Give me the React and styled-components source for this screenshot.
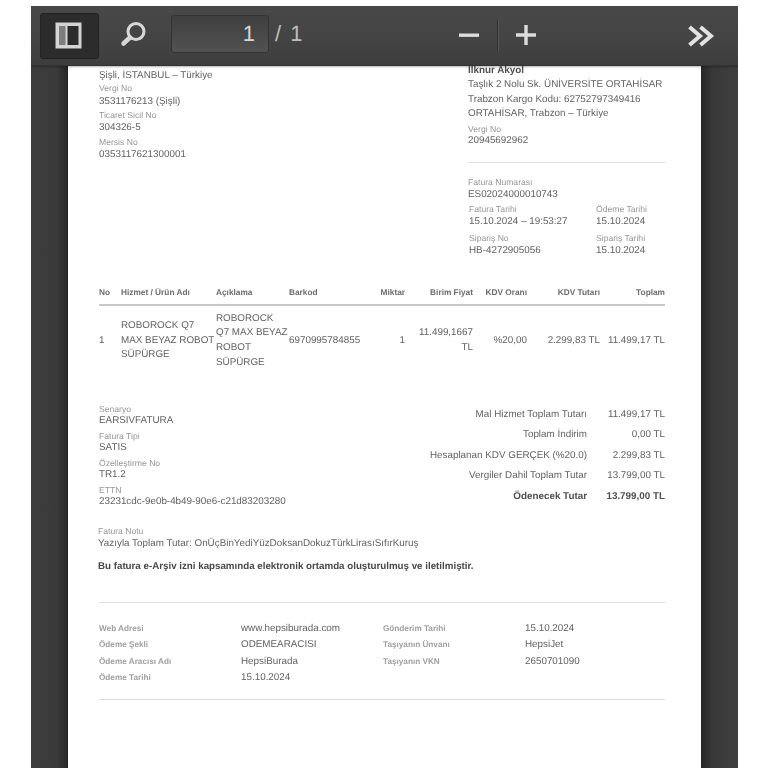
import React from "react";
import styled, { createGlobalStyle } from "styled-components";

const Global = createGlobalStyle`
  html, body { margin: 0; padding: 0; background: #fff; height: 100%; overflow: hidden; }
  #root { height: 100%; }
  * { box-sizing: border-box; }
`;

const Viewer = styled.div`
  margin: 6px 30px 0 31px;
  height: 762px;
  display: flex;
  flex-direction: column;
  overflow: hidden;
  background: linear-gradient(90deg, #3d3d3d 0%, #3a3a3a 70%, #262626 100%) left / 37px 100% no-repeat,
    linear-gradient(90deg, #262626 0%, #383838 30%, #3f3f3f 100%) right / 37px 100% no-repeat, #3a3a3a;
  font-family: "Liberation Sans", Arial, sans-serif;
  text-rendering: geometricPrecision;
`;

const Toolbar = styled.header`
  height: 60px;
  flex: none;
  display: flex;
  align-items: center;
  padding: 0 23px 0 9px;
  background: linear-gradient(180deg, #484848 0%, #444 55%, #3d3d3d 100%);
  border-bottom: 1px solid #333;
  box-shadow: 0 1px 2px rgba(0, 0, 0, 0.3);
  position: relative;
  z-index: 1;
`;

const ToggleButton = styled.div`
  width: 59px;
  height: 46px;
  padding-right: 2px;
  display: flex;
  align-items: center;
  justify-content: center;
  background: #2c2c2c;
  border: 1px solid #222;
  border-radius: 3px;
`;

const SearchIcon = styled.svg`
  width: 26px;
  height: 26px;
  margin: 0 0 3px 21px;
`;

const PageInput = styled.div`
  width: 98px;
  height: 38px;
  margin: 0 0 4px 25px;
  display: flex;
  align-items: center;
  justify-content: flex-end;
  padding-right: 13px;
  color: #d5d5d5;
  font-size: 22px;
  background: linear-gradient(180deg, #3f3f3f, #515151);
  border: 1px solid #333;
  border-radius: 3px;
`;

const PageCount = styled.span`
  margin: 0 0 4px 6px;
  color: #bdbdbd;
  font-size: 22px;
  word-spacing: 3px;
`;

const ZoomGroup = styled.div`
  display: flex;
  align-items: center;
  margin: 0 0 2px 156px;
`;

const ZoomIcon = styled.svg`
  width: 22px;
  height: 22px;
`;

const ZoomDivider = styled.span`
  width: 2px;
  height: 32px;
  margin: 0 16px 0 17px;
  background: #333;
  border-right: 1px solid #555;
`;

const MoreIcon = styled.svg`
  width: 28px;
  height: 24px;
  margin-left: auto;
`;

const Body = styled.main`
  flex: 1;
  min-height: 0;
  padding: 0 37px;
`;

const Page = styled.article`
  height: 100%;
  padding: 0 36px 0 31px;
  overflow: hidden;
  background: #fff;
  color: #626262;
  font-size: 9.85px;
  filter: blur(0.45px);
`;

const TopRow = styled.section`
  display: flex;
  justify-content: space-between;
  height: 210px;
`;

const LeftColumn = styled.div`
  padding-top: 2px;
`;

const RightColumn = styled.div`
  width: 197px;
  margin-top: -3px;
`;

const Label = styled.div`
  font-size: 8.6px;
  line-height: ${(p) => p.$h ?? 10}px;
  color: #969696;
  margin-top: ${(p) => p.$top ?? 4}px;
  margin-bottom: ${(p) => p.$gap ?? 0}px;
  white-space: nowrap;
`;

const Value = styled.div`
  font-size: 9.85px;
  line-height: ${(p) => p.$line ?? 13}px;
  padding-top: 1px;
  margin-bottom: -1px;
  color: #626262;
  white-space: nowrap;
`;

const PlainValue = styled(Value)`
  padding-top: 0;
  margin-bottom: 0;
`;

const Name = styled(Value)`
  font-weight: 700;
  color: #4f4f4f;
  line-height: 14px;
`;

const Address = styled(Value)`
  line-height: 14.6px;
`;

const Rule = styled.hr`
  height: 1px;
  border: 0;
  background: #dedede;
  margin: ${(p) => p.$margin ?? "0"};
`;

const DateGrid = styled.div`
  display: grid;
  grid-template-columns: 127px 1fr;
  padding-left: 1px;
`;

const InvoiceTable = styled.section`
  margin-top: 8px;
`;

const columns = "22px 95px 73px 84px 32px 68px 54px 73px 65px";

const HeadRow = styled.div`
  display: grid;
  grid-template-columns: ${columns};
  height: 22px;
  align-items: center;
  border-bottom: 2px solid #c9c9c9;
  padding-bottom: 4px;
`;

const HeadCell = styled.div`
  font-size: 8.3px;
  font-weight: 700;
  color: #6c6c6c;
  white-space: nowrap;
  text-align: ${(p) => (p.$right ? "right" : "left")};
`;

const BodyRow = styled.div`
  display: grid;
  grid-template-columns: ${columns};
  align-items: center;
  height: 70px;
`;

const Cell = styled.div`
  font-size: 9.85px;
  line-height: 14.6px;
  text-align: ${(p) => (p.$right ? "right" : "left")};
  white-space: nowrap;
`;

const Summary = styled.section`
  display: flex;
  justify-content: space-between;
  margin-top: 29px;
`;

const SummaryLeft = styled.div``;

const Totals = styled.div`
  display: grid;
  grid-template-columns: auto 78px;
  grid-auto-rows: 20.5px;
  align-items: center;
  margin-top: -1px;
`;

const TotalLabel = styled.div`
  text-align: right;
  white-space: nowrap;
  font-weight: ${(p) => (p.$bold ? 700 : 400)};
  color: ${(p) => (p.$bold ? "#4f4f4f" : "#626262")};
`;

const TotalValue = styled(TotalLabel)``;

const Note = styled.section`
  margin: 18px 0 0 -1px;
`;

const Notice = styled.p`
  margin: 12px 0 0;
  font-size: 9.75px;
  line-height: 12px;
  font-weight: 700;
  color: #484848;
  white-space: nowrap;
`;

const FooterGrid = styled.section`
  display: grid;
  grid-template-columns: 142px 142px 142px 1fr;
  grid-auto-rows: 16.3px;
  align-items: center;
  padding: 17.5px 0 13.5px;
`;

const FooterLabel = styled.div`
  font-size: 8.2px;
  font-weight: 700;
  color: #a0a0a0;
  white-space: nowrap;
`;

const rows = [
  ["Web Adresi", "www.hepsiburada.com", "Gönderim Tarihi", "15.10.2024"],
  ["Ödeme Şekli", "ODEMEARACISI", "Taşıyanın Ünvanı", "HepsiJet"],
  ["Ödeme Aracısı Adı", "HepsiBurada", "Taşıyanın VKN", "2650701090"],
  ["Ödeme Tarihi", "15.10.2024", "", ""],
];

const totals = [
  ["Mal Hizmet Toplam Tutarı", "11.499,17 TL"],
  ["Toplam İndirim", "0,00 TL"],
  ["Hesaplanan KDV GERÇEK (%20.0)", "2.299,83 TL"],
  ["Vergiler Dahil Toplam Tutar", "13.799,00 TL"],
  ["Ödenecek Tutar", "13.799,00 TL", true],
];

export default function App() {
  return (
    <>
      <Global />
      <Viewer>
        <Toolbar>
          <ToggleButton>
            <svg width="27" height="27" viewBox="0 0 27 27">
              <rect x="0.5" y="0.5" width="26" height="26" fill="#d4d4d4" />
              <rect x="4" y="4" width="6.5" height="19" fill="#7d7d7d" />
              <rect x="12.5" y="4" width="11" height="19" fill="#2c2c2c" />
            </svg>
          </ToggleButton>
          <SearchIcon viewBox="0 0 26 26">
            <circle cx="16" cy="10.5" r="8" fill="none" stroke="#d8d8d8" strokeWidth="3" />
            <path d="M10 16.5 L3.5 22.5" stroke="#d8d8d8" strokeWidth="4.5" strokeLinecap="round" />
          </SearchIcon>
          <PageInput>1</PageInput>
          <PageCount>/ 1</PageCount>
          <ZoomGroup>
            <ZoomIcon viewBox="0 0 22 22">
              <rect x="1" y="9.5" width="20" height="3.4" fill="#dcdcdc" />
            </ZoomIcon>
            <ZoomDivider />
            <ZoomIcon viewBox="0 0 22 22">
              <path d="M1 11h20M11 1v20" stroke="#dcdcdc" strokeWidth="3.4" />
            </ZoomIcon>
          </ZoomGroup>
          <MoreIcon viewBox="0 0 28 24">
            <path d="M2.5 3 L13 12 L2.5 21 M13.5 3 L24 12 L13.5 21" fill="none" stroke="#e2e2e2" strokeWidth="4" />
          </MoreIcon>
        </Toolbar>
        <Body>
          <Page>
            <TopRow>
              <LeftColumn>
                <Value>Şişli, İSTANBUL – Türkiye</Value>
                <Label $top={2} $gap={1}>Vergi No</Label>
                <Value>3531176213 (Şişli)</Value>
                <Label $top={3} $gap={1}>Ticaret Sicil No</Label>
                <Value $line={12}>304326-5</Value>
                <Label>Mersis No</Label>
                <Value>0353117621300001</Value>
              </LeftColumn>
              <RightColumn>
                <Name>İlknur Akyol</Name>
                <Address>Taşlık 2 Nolu Sk. ÜNİVERSİTE ORTAHİSAR</Address>
                <Address>Trabzon Kargo Kodu: 62752797349416</Address>
                <Address>ORTAHİSAR, Trabzon – Türkiye</Address>
                <Label $top={3.5}>Vergi No</Label>
                <Value $line={12}>20945692962</Value>
                <Rule $margin="16px 0 13.5px" />
                <Label $top={0}>Fatura Numarası</Label>
                <Value>ES02024000010743</Value>
                <DateGrid>
                  <div>
                    <Label>Fatura Tarihi</Label>
                    <Value>15.10.2024 – 19:53:27</Value>
                    <Label $top={6}>Sipariş No</Label>
                    <Value>HB-4272905056</Value>
                  </div>
                  <div>
                    <Label>Ödeme Tarihi</Label>
                    <Value>15.10.2024</Value>
                    <Label $top={6}>Sipariş Tarihi</Label>
                    <Value>15.10.2024</Value>
                  </div>
                </DateGrid>
              </RightColumn>
            </TopRow>
            <InvoiceTable>
              <HeadRow>
                <HeadCell>No</HeadCell>
                <HeadCell>Hizmet / Ürün Adı</HeadCell>
                <HeadCell>Açıklama</HeadCell>
                <HeadCell>Barkod</HeadCell>
                <HeadCell $right>Miktar</HeadCell>
                <HeadCell $right>Birim Fiyat</HeadCell>
                <HeadCell $right>KDV Oranı</HeadCell>
                <HeadCell $right>KDV Tutarı</HeadCell>
                <HeadCell $right>Toplam</HeadCell>
              </HeadRow>
              <BodyRow>
                <Cell>1</Cell>
                <Cell>ROBOROCK Q7<br />MAX BEYAZ ROBOT<br />SÜPÜRGE</Cell>
                <Cell>ROBOROCK<br />Q7 MAX BEYAZ<br />ROBOT<br />SÜPÜRGE</Cell>
                <Cell>6970995784855</Cell>
                <Cell $right>1</Cell>
                <Cell $right>11.499,1667<br />TL</Cell>
                <Cell $right>%20,00</Cell>
                <Cell $right>2.299,83 TL</Cell>
                <Cell $right>11.499,17 TL</Cell>
              </BodyRow>
            </InvoiceTable>
            <Summary>
              <SummaryLeft>
                <Label $top={0} $h={9}>Senaryo</Label>
                <PlainValue>EARSIVFATURA</PlainValue>
                <Label $top={5} $h={9}>Fatura Tipi</Label>
                <PlainValue>SATIS</PlainValue>
                <Label $top={5} $h={9}>Özelleştirme No</Label>
                <PlainValue>TR1.2</PlainValue>
                <Label $top={5} $h={9}>ETTN</Label>
                <PlainValue>23231cdc-9e0b-4b49-90e6-c21d83203280</PlainValue>
              </SummaryLeft>
              <Totals>
                {totals.map(([l, v, b]) => (
                  <React.Fragment key={l}>
                    <TotalLabel $bold={b}>{l}</TotalLabel>
                    <TotalValue $bold={b}>{v}</TotalValue>
                  </React.Fragment>
                ))}
              </Totals>
            </Summary>
            <Note>
              <Label $top={0}>Fatura Notu</Label>
              <Value>Yazıyla Toplam Tutar: OnÜçBinYediYüzDoksanDokuzTürkLirasıSıfırKuruş</Value>
              <Notice>Bu fatura e-Arşiv izni kapsamında elektronik ortamda oluşturulmuş ve iletilmiştir.</Notice>
            </Note>
            <Rule $margin="29px 0 0" />
            <FooterGrid>
              {rows.map((r) => (
                <React.Fragment key={r[0]}>
                  <FooterLabel>{r[0]}</FooterLabel>
                  <PlainValue>{r[1]}</PlainValue>
                  <FooterLabel>{r[2]}</FooterLabel>
                  <PlainValue>{r[3]}</PlainValue>
                </React.Fragment>
              ))}
            </FooterGrid>
            <Rule />
          </Page>
        </Body>
      </Viewer>
    </>
  );
}
